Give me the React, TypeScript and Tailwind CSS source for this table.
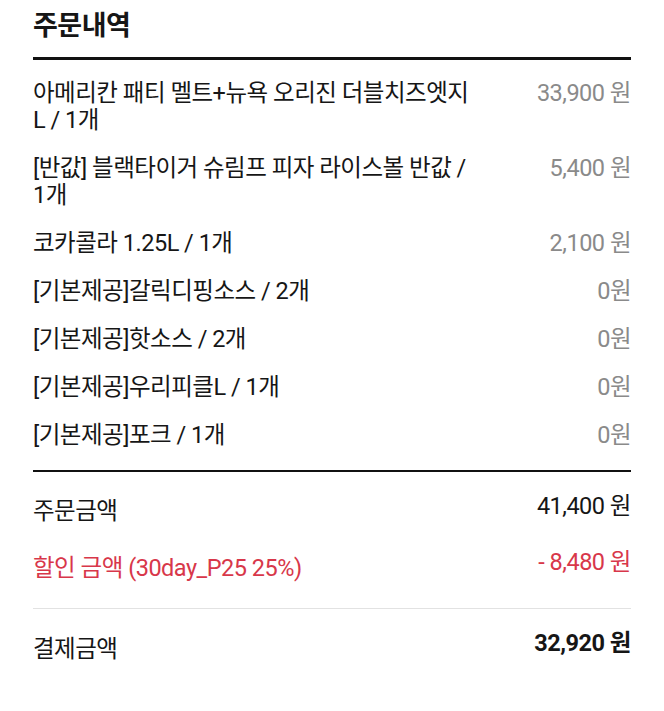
type OrderItem = {
  name: string;
  price: string;
};

const items: OrderItem[] = [
  { name: "아메리칸 패티 멜트+뉴욕 오리진 더블치즈엣지 L / 1개", price: "33,900 원" },
  { name: "[반값] 블랙타이거 슈림프 피자 라이스볼 반값 / 1개", price: "5,400 원" },
  { name: "코카콜라 1.25L / 1개", price: "2,100 원" },
  { name: "[기본제공]갈릭디핑소스 / 2개", price: "0원" },
  { name: "[기본제공]핫소스 / 2개", price: "0원" },
  { name: "[기본제공]우리피클L / 1개", price: "0원" },
  { name: "[기본제공]포크 / 1개", price: "0원" },
];

export default function App() {
  return (
    <div className="min-h-[711px] bg-white px-[33px] font-['Roboto','Noto_Sans_CJK_KR',sans-serif] text-[#161616]">
      <h2 className="border-b-[3px] border-[#111] pb-[12px] pt-[7px] text-[27px] font-bold leading-[38px] tracking-[-0.5px]">
        주문내역
      </h2>

      <ul className="border-b-2 border-[#111] pb-[11px] pt-[9px]">
        {items.map((item) => (
          <li
            key={item.name}
            className="flex items-start justify-between gap-6 pb-[10px] pt-[11px] text-[23.5px] leading-[27px] tracking-[-0.5px]"
          >
            <span className="max-w-[448px]">{item.name}</span>
            <span className="shrink-0 text-[#8a8a8a]">{item.price}</span>
          </li>
        ))}
      </ul>

      <div className="border-b border-[#e2e2e2] pb-[26px] pt-[21px]">
        <div className="flex items-start justify-between text-[23.5px] leading-[27px] tracking-[-0.5px]">
          <span className="pt-[5px]">주문금액</span>
          <span>41,400 원</span>
        </div>
        <div className="mt-[24px] flex items-start justify-between text-[23.5px] leading-[27px] tracking-[-0.5px] text-[#d8374a]">
          <span className="pt-[6px]">할인 금액 (30day_P25 25%)</span>
          <span>- 8,480 원</span>
        </div>
      </div>

      <div className="flex items-start justify-between pt-[21px] text-[23.5px] leading-[27px] tracking-[-0.5px]">
        <span className="pt-[6px]">결제금액</span>
        <span className="font-bold">32,920 원</span>
      </div>
    </div>
  );
}
